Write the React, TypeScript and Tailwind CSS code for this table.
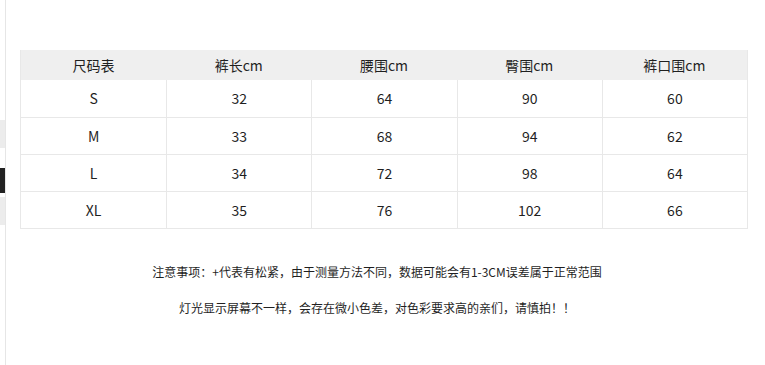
const COLUMNS = ['尺码表', '裤长cm', '腰围cm', '臀围cm', '裤口围cm'];

const ROWS = [
  ['S', '32', '64', '90', '60'],
  ['M', '33', '68', '94', '62'],
  ['L', '34', '72', '98', '64'],
  ['XL', '35', '76', '102', '66'],
];

const FONT = { fontFamily: '"Microsoft YaHei", "Noto Sans CJK SC", "Noto Sans", sans-serif' };

export default function App() {
  return (
    <div className="flex h-[365px] w-[765px] overflow-hidden bg-white text-[#1f1f1f]" style={FONT}>
      {/* tira lateral con las pestañas cortadas */}
      <div className="flex w-[6px] shrink-0 flex-col border-r border-[#e6e6e6]">
        <div className="mt-[120px] h-[28px] w-[5px] bg-[#ececec]" />
        <div className="mt-[20px] h-[25px] w-[5px] bg-[#222]" />
        <div className="mt-[4px] h-[28px] w-[5px] bg-[#ececec]" />
      </div>

      <div className="flex w-[728px] flex-col pl-[14px] pt-[50px]">
        <div className="w-[728px] border-x border-b border-[#e8e8e8]">
          <div className="grid h-[30px] grid-cols-5 bg-[#efefef] text-[14px]">
            {COLUMNS.map((c) => (
              <div key={c} className="flex items-center justify-center">
                {c}
              </div>
            ))}
          </div>
          {ROWS.map((row, i) => (
            <div
              key={row[0]}
              className={`grid h-[37px] grid-cols-5 text-[14px] ${i > 0 ? 'border-t border-[#e8e8e8]' : ''}`}
            >
              {row.map((v, j) => (
                <div
                  key={j}
                  className={`flex items-center justify-center ${j > 0 ? 'border-l border-[#e8e8e8]' : ''}`}
                >
                  {v}
                </div>
              ))}
            </div>
          ))}
        </div>

        <p className="mt-[33px] text-center text-[12px] leading-[20px]">
          注意事项：+代表有松紧，由于测量方法不同，数据可能会有1-3CM误差属于正常范围
        </p>
        <p className="mt-[16px] text-center text-[12px] leading-[20px]">
          灯光显示屏幕不一样，会存在微小色差，对色彩要求高的亲们，请慎拍！！
        </p>
      </div>
    </div>
  );
}
